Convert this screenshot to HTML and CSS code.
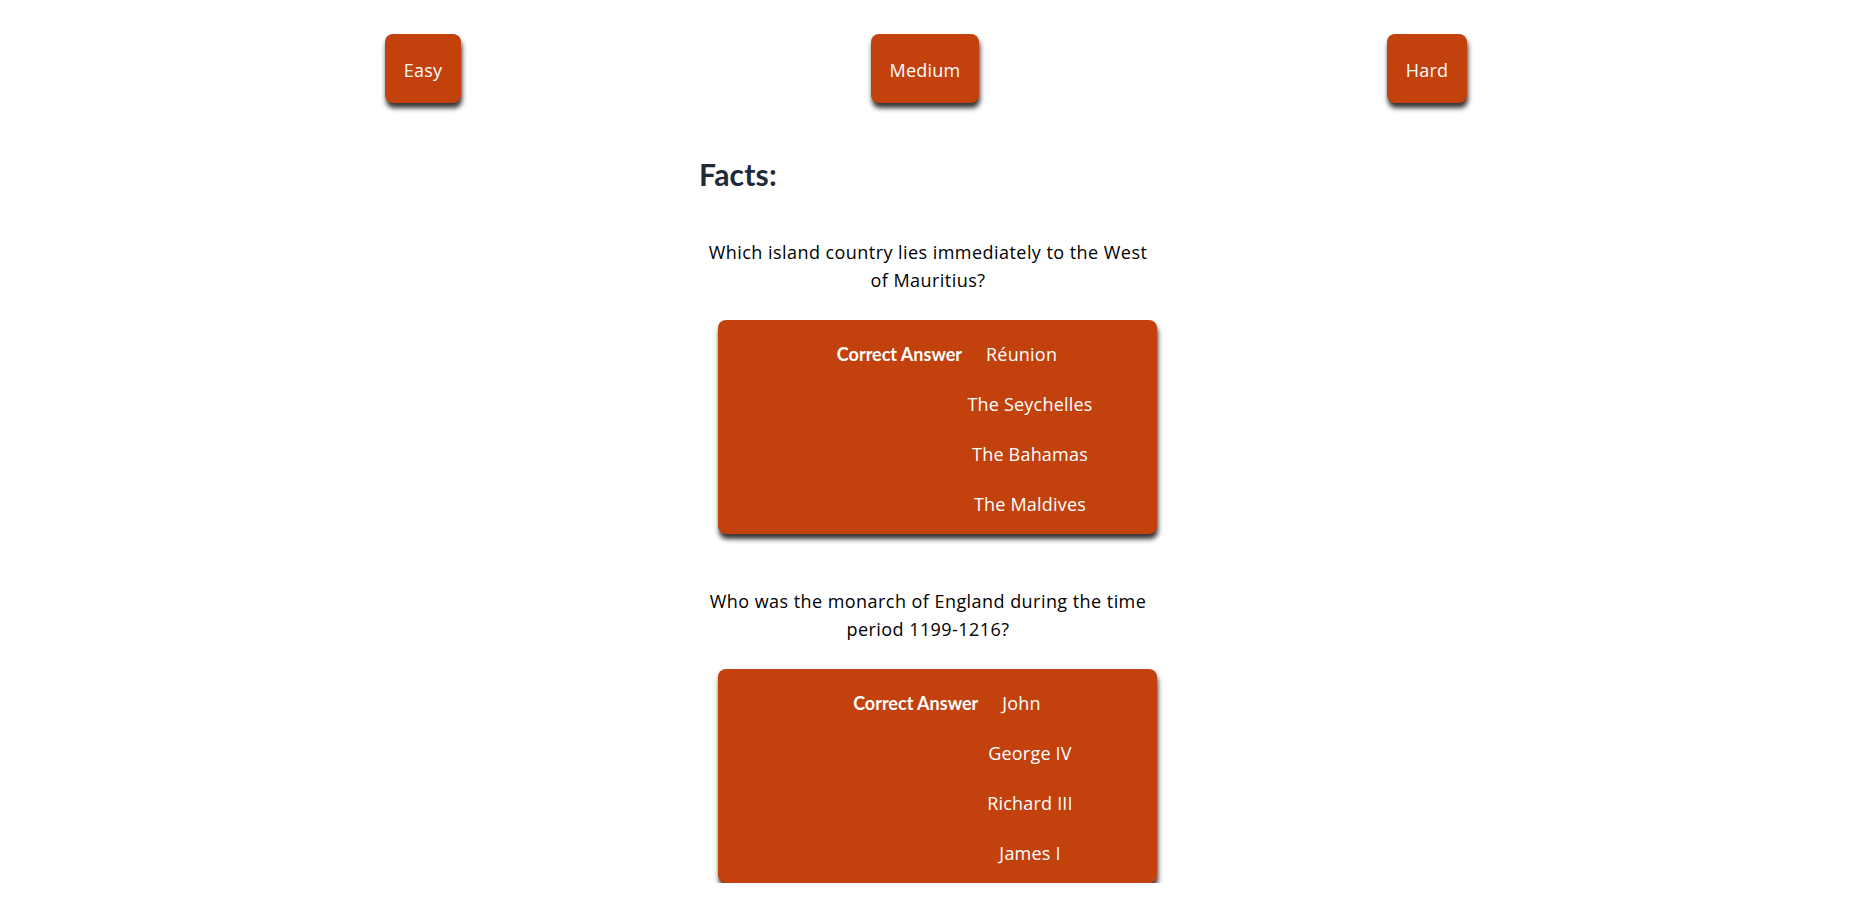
FILE: index.html
```html
<!DOCTYPE html>
<html lang="en">
<head>
<meta charset="utf-8">
<title>Facts</title>
<link rel="stylesheet" href="styles.css">
</head>
<body>
<nav class="levels">
  <button class="level">Easy</button>
  <button class="level">Medium</button>
  <button class="level">Hard</button>
</nav>
<main class="facts">
  <h1 class="facts-title">Facts:</h1>
  <section class="fact">
    <p class="question">Which island country lies immediately to the West of Mauritius?</p>
    <div class="card">
      <div class="correct-row"><span class="label">Correct Answer</span><span class="answer">Réunion</span></div>
      <div class="wrong">The Seychelles</div>
      <div class="wrong">The Bahamas</div>
      <div class="wrong">The Maldives</div>
    </div>
  </section>
  <section class="fact">
    <p class="question">Who was the monarch of England during the time period 1199-1216?</p>
    <div class="card">
      <div class="correct-row"><span class="label">Correct Answer</span><span class="answer">John</span></div>
      <div class="wrong">George IV</div>
      <div class="wrong">Richard III</div>
      <div class="wrong">James I</div>
    </div>
  </section>
</main>
</body>
</html>
```
FILE: styles.css
```css
html, body {
  margin: 0;
  padding: 0;
  background: #ffffff;
}
body {
  font-family: "Open Sans", "Noto Sans", sans-serif;
  letter-spacing: 0.45px;
  color: #000;
}
.levels {
  display: grid;
  grid-template-columns: repeat(3, 502px);
  justify-items: center;
  padding: 34px 0 0 172px;
}
.level {
  font-family: inherit;
  letter-spacing: 0.2px;
  font-size: 18px;
  line-height: 28px;
  padding: 22px 19px 19px;
  color: #fff;
  background: #c2410c;
  border: none;
  border-radius: 8px;
  box-shadow: 1px 5px 5px rgba(0, 0, 0, 0.8);
}
.facts {
  width: 458px;
  margin: 0 auto;
  padding-right: 17px;
}
.facts-title {
  margin: 53px 0 0;
  font-family: Lato, "Open Sans", sans-serif;
  letter-spacing: 0.2px;
  font-size: 30px;
  line-height: 36px;
  font-weight: 700;
  color: #1e2939;
}
.fact {
  padding-top: 46px;
}
.fact + .fact {
  padding-top: 53px;
}
.question {
  margin: 0;
  font-size: 18px;
  line-height: 28px;
  text-align: center;
}
.card {
  margin: 26px 0 0 19px;
  width: 439px;
  box-sizing: border-box;
  padding: 9px 0 5px 19px;
  background: #c2410c;
  color: #fff;
  border-radius: 8px;
  box-shadow: 1px 5px 5px rgba(0, 0, 0, 0.8);
  font-size: 18px;
}
.correct-row {
  display: flex;
  justify-content: center;
  align-items: center;
  gap: 24px;
  height: 50px;
}
.label {
  font-family: Lato, "Open Sans", sans-serif;
  font-weight: 700;
  letter-spacing: 0;
}
.answer {
  letter-spacing: 0.2px;
}
.wrong {
  height: 50px;
  line-height: 50px;
  margin-left: 166px;
  text-align: center;
  letter-spacing: 0.2px;
}
```
